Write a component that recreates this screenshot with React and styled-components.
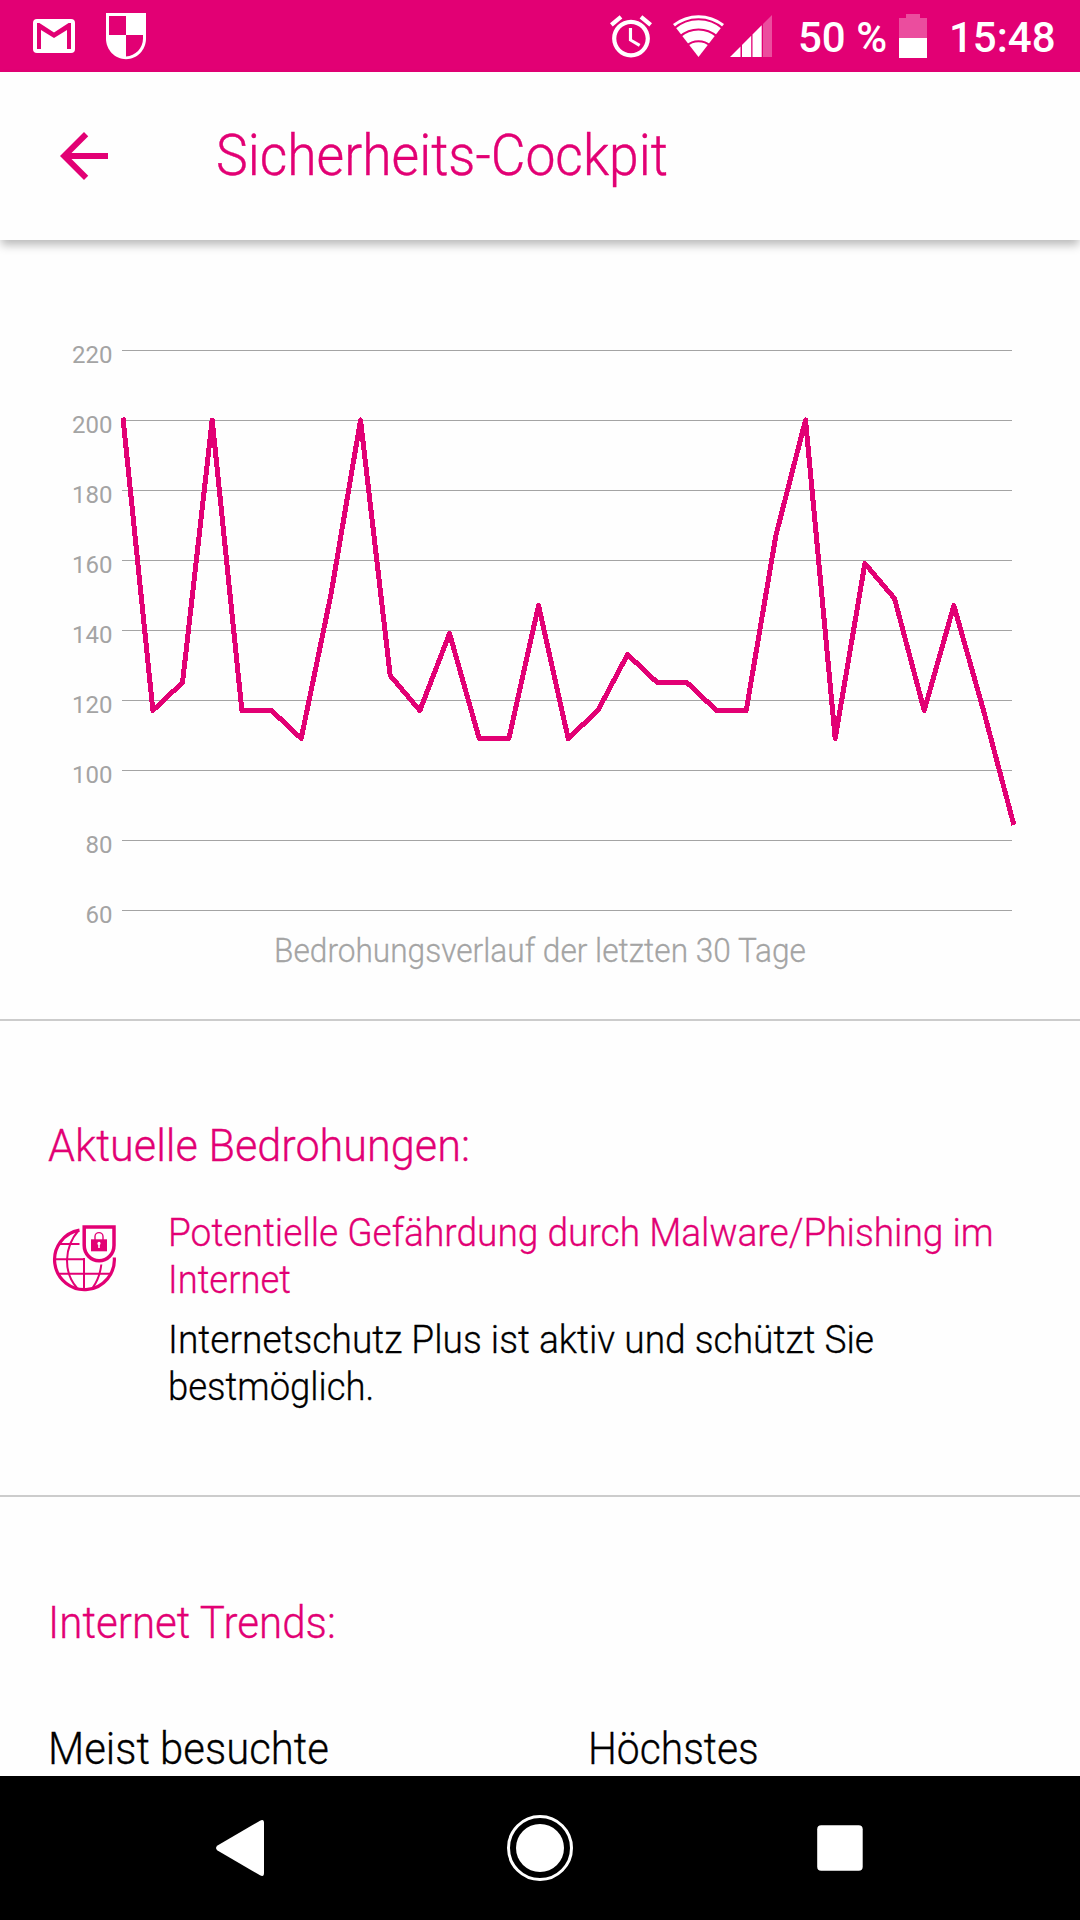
import React from "react";
import styled, { createGlobalStyle } from "styled-components";

const magenta = "#e20074";
const grey = "#a4a4a4";

const GlobalStyle = createGlobalStyle`
  * { box-sizing: border-box; }
  body { margin: 0; background: #fefefe; }
`;

const Phone = styled.div`
  width: 1080px;
  height: 1920px;
  display: flex;
  flex-direction: column;
  overflow: hidden;
  background: #fefefe;
  font-family: Roboto, "Liberation Sans", sans-serif;
  font-weight: 300;
`;

const StatusBar = styled.header`
  flex: none;
  height: 72px;
  display: flex;
  align-items: center;
  justify-content: space-between;
  padding: 0 25px 0 33px;
  background: ${magenta};
  color: #fff;
`;

const StatusGroup = styled.div`
  display: flex;
  align-items: center;
`;

const StatusIcon = styled.svg`
  display: block;
  flex: none;
  height: 72px;
  width: ${(p) => p.$width}px;
  margin-left: ${(p) => p.$gap || 0}px;
`;

const StatusText = styled.span`
  width: ${(p) => p.$width}px;
  margin-left: ${(p) => p.$gap}px;
  padding-top: 3px;
  font-size: 42px;
  font-weight: 500;
  line-height: 72px;
  white-space: nowrap;
`;

const AppBar = styled.div`
  flex: none;
  height: 168px;
  display: flex;
  align-items: center;
  padding-left: 48px;
  background: #fefefe;
  position: relative;
  box-shadow: 0 6px 9px -1px rgba(0, 0, 0, 0.27);
`;

const BackIcon = styled.svg`
  width: 72px;
  height: 72px;
  fill: ${magenta};
`;

const Title = styled.h1`
  margin: 0 0 2px 96px;
  font-size: 58px;
  line-height: 68px;
  font-weight: 300;
  color: ${magenta};
  white-space: nowrap;
  -webkit-text-stroke: 0.4px currentColor;
  transform: scaleX(0.921);
  transform-origin: left;
`;

const Content = styled.main`
  flex: 1;
  min-height: 0;
  overflow: hidden;
`;

const ChartSection = styled.section`
  height: 781px;
  padding-top: 80px;
  border-bottom: 2px solid #ccc;
`;

const ChartArea = styled.div`
  display: flex;
  height: 610px;
`;

const Axis = styled.div`
  width: 112.5px;
  display: flex;
  flex-direction: column;
  text-align: right;
`;

const AxisLabel = styled.span`
  flex: none;
  font-size: 24px;
  font-weight: 400;
  line-height: 70px;
  color: ${grey};
`;

const Plot = styled.svg`
  display: block;
  width: 907px;
  height: 610px;
  margin-left: 0.5px;
`;

const Caption = styled.p`
  margin: 0;
  font-size: 34px;
  line-height: 40px;
  text-align: center;
  color: ${grey};
  -webkit-text-stroke: 0.3px currentColor;
  transform: scaleX(0.93);
`;

const Section = styled.section`
  height: ${(p) => p.$height || "auto"};
  padding: ${(p) => p.$top} 48px 0;
  border-bottom: ${(p) => (p.$divided ? "2px solid #ccc" : "none")};
`;

const Line = styled.span`
  display: block;
  white-space: nowrap;
  -webkit-text-stroke: 0.3px currentColor;
  transform: scaleX(${(p) => p.$squeeze});
  transform-origin: left;
`;

const Heading = styled.h2`
  margin: 0;
  font-size: 45px;
  font-weight: 300;
  line-height: 54px;
  color: ${magenta};
`;

const Threat = styled.article`
  display: flex;
  margin-top: 37px;
`;

const ThreatIcon = styled.svg`
  flex: none;
  width: 72px;
  height: 72px;
  margin: 10px 48px 0 0;
`;

const ThreatBody = styled.div`
  flex: 1;
  min-width: 0;
`;

const Paragraph = styled.p`
  margin: 0 0 13px;
  font-size: 39px;
  line-height: 47px;
  color: ${(p) => (p.$accent ? magenta : "#000")};
`;

const Columns = styled.div`
  display: grid;
  grid-template-columns: 540px 1fr;
  margin-top: 72px;
  font-size: 45px;
  line-height: 54px;
  color: #000;
`;

const NavBar = styled.nav`
  flex: none;
  height: 144px;
  display: flex;
  align-items: center;
  justify-content: space-between;
  padding: 0 204px;
  background: #000;
`;

const NavIcon = styled.svg`
  width: 72px;
  height: 72px;
  fill: #fff;
`;

const ticks = [220, 200, 180, 160, 140, 120, 100, 80, 60];
const threats = [
  200, 117, 125, 200, 117, 117, 109, 150, 200, 127, 117, 139, 109, 109, 147,
  109, 117, 133, 125, 125, 117, 117, 167, 200, 109, 159, 149, 117, 147, 117, 85,
];
const plotLeft = 9;
const step = 890 / (threats.length - 1);
const points = threats
  .map((v, i) => `${(plotLeft + 1.2 + i * step).toFixed(2)},${30 + (220 - v) * 3.5}`)
  .join(" ");

function Chart() {
  return (
    <ChartArea>
      <Axis>
        {ticks.map((t) => (
          <AxisLabel key={t}>{t}</AxisLabel>
        ))}
      </Axis>
      <Plot viewBox="0 0 907 610">
        {ticks.map((t, i) => (
          <rect key={t} x={plotLeft} y={30 + i * 70} width="890" height="1" fill={grey} />
        ))}
        <polyline
          points={points}
          fill="none"
          stroke={magenta}
          strokeWidth="5"
          strokeLinejoin="round"
          strokeLinecap="square"
          shapeRendering="crispEdges"
        />
      </Plot>
    </ChartArea>
  );
}

function GlobeShield() {
  return (
    <ThreatIcon viewBox="8 10 72 72" fill="none" stroke={magenta}>
      <path d="M39.5 20.2A29.9 29.9 0 1 0 74.3 47.5" strokeWidth="3.2" />
      <path
        d="M20 34h19.5M14 49.3h31M18 63.7h52M44 48v32M38.5 20.5C24 37 23 62 37 78M61.3 54.5c-1 9-4 17-8.8 23.5"
        strokeWidth="2"
      />
      <path d="M44.2 16.9h29.8v18.3a14.9 15.6 0 0 1-29.8 0z" strokeWidth="3.5" />
      <path d="M55 30v-3.4a4 4 0 0 1 8 0V30" strokeWidth="1.4" />
      <rect x="51" y="29.3" width="16" height="12" fill={magenta} stroke="none" />
      <path d="M58.9 31.8a1.8 1.8 0 0 1 .9 3.3v3h-1.6v-3a1.8 1.8 0 0 1 .7-3.3z" fill="#fff" stroke="none" />
    </ThreatIcon>
  );
}

export default function App() {
  return (
    <Phone>
      <GlobalStyle />
      <StatusBar>
        <StatusGroup>
          <StatusIcon $width={42} viewBox="33 0 42 72">
            <rect x="33" y="19" width="42" height="34" rx="4" fill="#fff" />
            <path
              d="M37 49V23h2.4L54 32.4 68.6 23H71v26h-4V30L54 38 41 30v19z"
              fill={magenta}
            />
          </StatusIcon>
          <StatusIcon $width={40} $gap={31} viewBox="106 0 40 72">
            <path d="M106 13h40v25.5c0 11.5-9 20.7-20 20.7s-20-9.2-20-20.7z" fill="#fff" />
            <path d="M109 16h17v19h-17zM126 35h17v3.5c0 9.5-7.5 17.5-17 18z" fill={magenta} />
          </StatusIcon>
        </StatusGroup>
        <StatusGroup>
          <StatusIcon $width={42} viewBox="610 0 42 72" fill="#fff">
            <path
              transform="translate(605.8 11.3) scale(2.1)"
              d="M22 5.72l-4.6-3.86-1.29 1.53 4.6 3.86L22 5.72zM7.88 3.39L6.6 1.86 2 5.71l1.29 1.53 4.59-3.85zM12.5 8H11v6l4.75 2.85.75-1.23-4-2.37V8zM12 4c-4.97 0-9 4.03-9 9s4.02 9 9 9c4.97 0 9-4.03 9-9s-4.03-9-9-9zm0 16c-3.87 0-7-3.13-7-7s3.13-7 7-7 7 3.13 7 7-3.13 7-7 7z"
            />
          </StatusIcon>
          <StatusIcon $width={52} $gap={21} viewBox="673 0 52 72">
            <path d="M698.5 57L673 24a42 42 0 0 1 51 0z" fill="#fff" />
            <path
              d="M674 28.5a37 37 0 0 1 49 0M680 36.5a28 28 0 0 1 37 0M686.5 46a17.5 17.5 0 0 1 24 0"
              fill="none"
              stroke={magenta}
              strokeWidth="2"
            />
          </StatusIcon>
          <StatusIcon $width={42} $gap={5} viewBox="730 0 42 72" fill="#fff">
            <path d="M730 57l10.5-10.5V57zM742 45l9.2-9.2V57H742zM752.5 34.5l9.2-9.2V57h-9.2z" />
            <path d="M763 24l9-9v42h-9z" opacity=".3" />
          </StatusIcon>
          <StatusText $gap={26} $width={92}>50 %</StatusText>
          <StatusIcon $width={28} $gap={9} viewBox="899 0 28 72" fill="#fff">
            <path d="M899 18h7v-4h14v4h7v20h-28z" opacity=".3" />
            <path d="M899 38h28v20h-28z" />
          </StatusIcon>
          <StatusText $gap={22} $width={106}>15:48</StatusText>
        </StatusGroup>
      </StatusBar>

      <AppBar>
        <BackIcon viewBox="0 0 24 24">
          <path d="M20 11H7.83l5.59-5.59L12 4l-8 8 8 8 1.41-1.41L7.83 13H20v-2z" />
        </BackIcon>
        <Title>Sicherheits-Cockpit</Title>
      </AppBar>

      <Content>
        <ChartSection>
          <Chart />
          <Caption>Bedrohungsverlauf der letzten 30 Tage</Caption>
        </ChartSection>

        <Section $height="476px" $top="98px" $divided>
          <Heading>
            <Line $squeeze={0.96}>Aktuelle Bedrohungen:</Line>
          </Heading>
          <Threat>
            <GlobeShield />
            <ThreatBody>
              <Paragraph $accent>
                <Line $squeeze={0.951}>Potentielle Gefährdung durch Malware/Phishing im</Line>
                <Line $squeeze={0.932}>Internet</Line>
              </Paragraph>
              <Paragraph>
                <Line $squeeze={0.952}>Internetschutz Plus ist aktiv und schützt Sie</Line>
                <Line $squeeze={0.935}>bestmöglich.</Line>
              </Paragraph>
            </ThreatBody>
          </Threat>
        </Section>

        <Section $top="99px">
          <Heading>
            <Line $squeeze={0.936}>Internet Trends:</Line>
          </Heading>
          <Columns>
            <Line $squeeze={0.93}>Meist besuchte</Line>
            <Line $squeeze={0.906}>Höchstes</Line>
          </Columns>
        </Section>
      </Content>

      <NavBar>
        <NavIcon viewBox="0 0 72 72">
          <path d="M13.5 33.5L56 8.7Q60 6.5 60 11v50q0 4.5-4 2.3L13.5 38.5Q10.5 36 13.5 33.5z" />
        </NavIcon>
        <NavIcon viewBox="0 0 72 72">
          <circle cx="36" cy="36" r="31.5" fill="none" stroke="#fff" strokeWidth="3" />
          <circle cx="36" cy="36" r="24" />
        </NavIcon>
        <NavIcon viewBox="0 0 72 72">
          <rect x="13.2" y="13.2" width="45.5" height="45.5" rx="4" />
        </NavIcon>
      </NavBar>
    </Phone>
  );
}
